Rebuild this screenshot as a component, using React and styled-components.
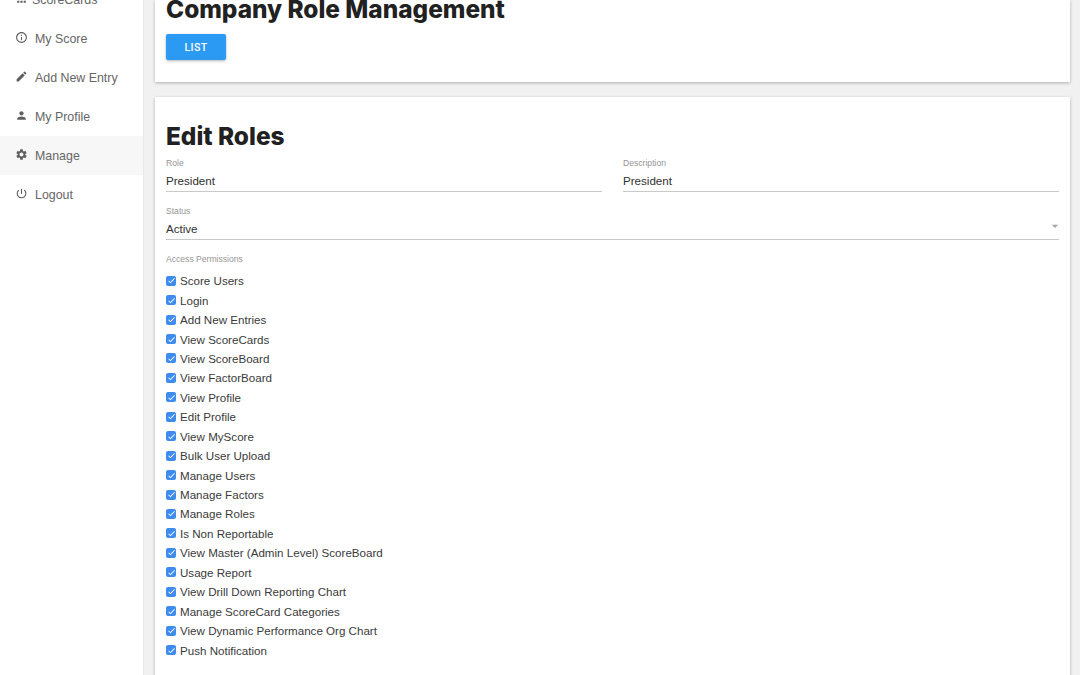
import React from 'react';
import styled, { createGlobalStyle } from 'styled-components';
import {
  MdApps,
  MdInfoOutline,
  MdEdit,
  MdPerson,
  MdSettings,
  MdPowerSettingsNew,
  MdCheck,
  MdArrowDropDown
} from 'react-icons/md';

const GlobalStyle = createGlobalStyle`
  html, body {
    margin: 0;
    height: 100%;
    overflow: hidden;
  }
  body {
    font-family: "Liberation Sans", Arial, sans-serif;
    color: #2b2b2b;
    background: #f1f1f1;
  }
`;

const Page = styled.div`
  display: flex;
  height: 100vh;
  overflow: hidden;
`;

const Sidebar = styled.nav`
  width: 143px;
  flex-shrink: 0;
  background: #fff;
  border-right: 1px solid #e9e9e9;
  margin-top: -20px;
`;

const NavRow = styled.div`
  display: flex;
  align-items: center;
  height: 39px;
  padding-left: 15px;
  gap: ${p => (p.$tight ? '4px' : '7px')};
  font-size: 12.4px;
  color: #666;
  background: ${p => (p.$active ? '#f7f7f7' : 'transparent')};

  svg {
    width: 13px;
    height: 13px;
    flex-shrink: 0;
    margin-top: -2px;
    color: #5f5f5f;
  }
`;

const Main = styled.main`
  flex: 1;
  min-width: 0;
  display: flex;
  flex-direction: column;
  gap: 15px;
  padding: 0 10px 0 11px;
`;

const Card = styled.section`
  background: #fff;
  box-shadow: 0 1px 3px rgba(0, 0, 0, 0.28);
  padding: ${p => p.$pad};
  flex-shrink: 0;
`;

const Title = styled.h1`
  margin: 0;
  font-family: Inter, Roboto, sans-serif;
  font-weight: 800;
  font-size: 24.4px;
  line-height: 30px;
  color: #212121;
`;

const TopTitle = styled(Title)`
  margin-top: -6px;
`;

const ListButton = styled.button`
  display: block;
  width: 60px;
  height: 26px;
  margin-top: 10px;
  padding: 0;
  border: none;
  border-radius: 2px;
  background: #2b9af3;
  color: #fff;
  font-family: Roboto, sans-serif;
  font-size: 10.5px;
  font-weight: 500;
  letter-spacing: 0.4px;
  box-shadow: 0 1px 3px rgba(0, 0, 0, 0.3);
`;

const FormRow = styled.div`
  display: grid;
  grid-template-columns: 436px 436px;
  column-gap: 21px;
  margin-top: 6px;
`;

const Field = styled.div`
  position: relative;
  margin-top: ${p => p.$top || '0'};
  border-bottom: 1px solid #c9c9c9;
  height: 34px;
`;

const FieldLabel = styled.div`
  font-size: 8.6px;
  line-height: 12px;
  color: #959595;
`;

const FieldValue = styled.div`
  font-size: 11.6px;
  line-height: 16px;
  margin-top: 4px;
  color: #303030;
`;

const Caret = styled(MdArrowDropDown)`
  position: absolute;
  right: -4px;
  top: 13px;
  width: 16px;
  height: 16px;
  color: #a8a8a8;
`;

const PermLabel = styled(FieldLabel)`
  margin-top: 13px;
  margin-bottom: 6px;
`;

const PermList = styled.div`
  display: flex;
  flex-direction: column;
`;

const PermRow = styled.label`
  display: flex;
  align-items: center;
  gap: 4px;
  height: 19.45px;
  font-size: 11.6px;
  color: #3a3a3a;
`;

const CheckBox = styled.span`
  display: flex;
  align-items: center;
  justify-content: center;
  width: 10px;
  height: 10px;
  border-radius: 2px;
  background: #3f8cf0;
  color: #fff;

  svg {
    width: 9px;
    height: 9px;
  }
`;

const navItems = [
  { label: 'ScoreCards', icon: MdApps, tight: true },
  { label: 'My Score', icon: MdInfoOutline },
  { label: 'Add New Entry', icon: MdEdit },
  { label: 'My Profile', icon: MdPerson },
  { label: 'Manage', icon: MdSettings, active: true },
  { label: 'Logout', icon: MdPowerSettingsNew }
];

const permissions = [
  'Score Users',
  'Login',
  'Add New Entries',
  'View ScoreCards',
  'View ScoreBoard',
  'View FactorBoard',
  'View Profile',
  'Edit Profile',
  'View MyScore',
  'Bulk User Upload',
  'Manage Users',
  'Manage Factors',
  'Manage Roles',
  'Is Non Reportable',
  'View Master (Admin Level) ScoreBoard',
  'Usage Report',
  'View Drill Down Reporting Chart',
  'Manage ScoreCard Categories',
  'View Dynamic Performance Org Chart',
  'Push Notification'
];

const App = () => (
  <>
    <GlobalStyle />
    <Page>
      <Sidebar>
        {navItems.map(({ label, icon: Icon, tight, active }) => (
          <NavRow key={label} $tight={tight} $active={active}>
            <Icon />
            {label}
          </NavRow>
        ))}
      </Sidebar>
      <Main>
        <Card $pad="0 11px 22px">
          <TopTitle as="h2">Company Role Management</TopTitle>
          <ListButton>LIST</ListButton>
        </Card>
        <Card $pad="24px 11px 20px">
          <Title>Edit Roles</Title>
          <FormRow>
            <Field>
              <FieldLabel>Role</FieldLabel>
              <FieldValue>President</FieldValue>
            </Field>
            <Field>
              <FieldLabel>Description</FieldLabel>
              <FieldValue>President</FieldValue>
            </Field>
          </FormRow>
          <Field $top="13px">
            <FieldLabel>Status</FieldLabel>
            <FieldValue>Active</FieldValue>
            <Caret />
          </Field>
          <PermLabel>Access Permissions</PermLabel>
          <PermList>
            {permissions.map(name => (
              <PermRow key={name}>
                <CheckBox><MdCheck /></CheckBox>
                {name}
              </PermRow>
            ))}
          </PermList>
        </Card>
      </Main>
    </Page>
  </>
);

export default App;
